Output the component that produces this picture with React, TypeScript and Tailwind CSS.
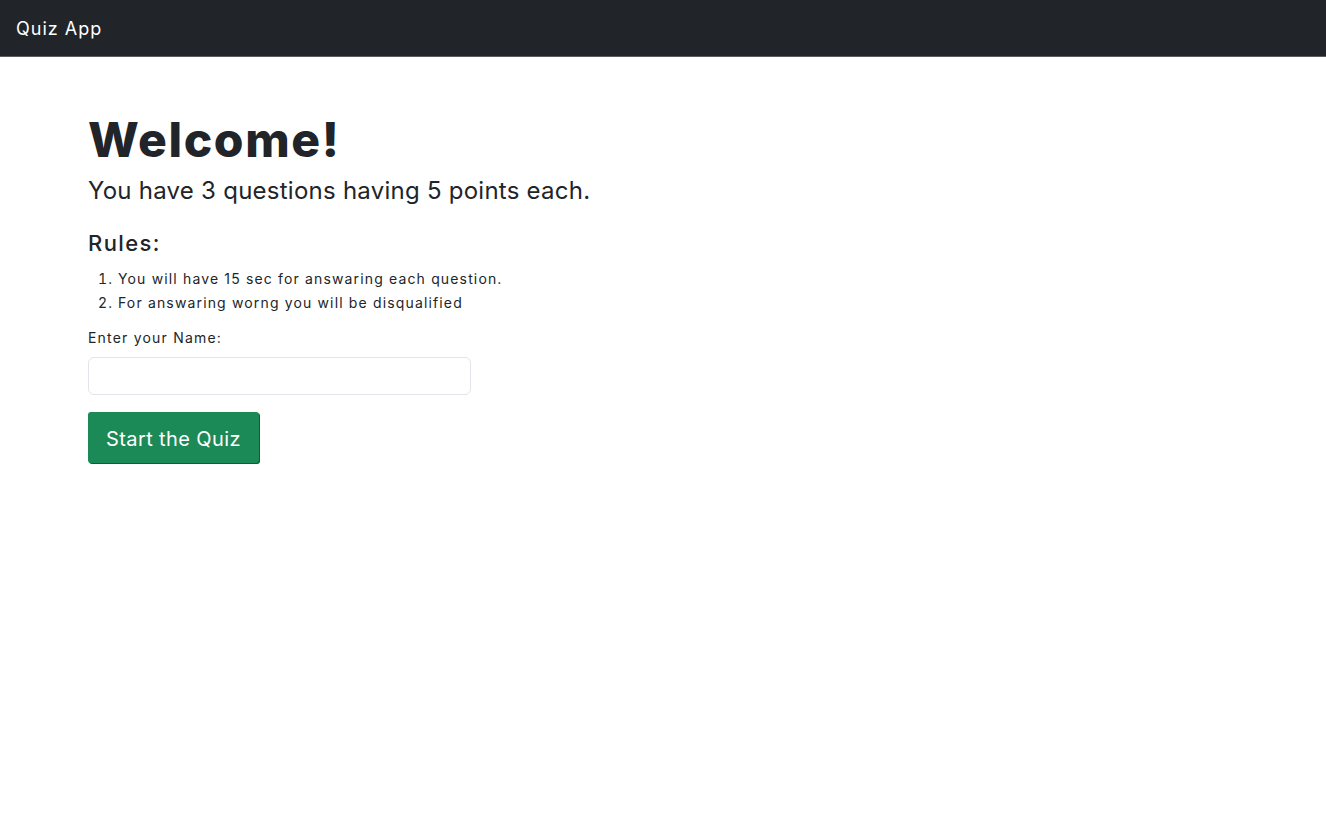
export default function App() {
  return (
    <div className="min-h-screen bg-white font-['Inter',sans-serif] text-[#212529]">
      <nav className="flex h-[57px] items-center border-b border-[#5a5d60] bg-[#212529] px-4">
        <span className="text-[18px] tracking-[1px] text-white">Quiz App</span>
      </nav>

      <main className="flex flex-col items-start px-[88px] pt-[54px]">
        <h1 className="text-[48px] font-extrabold leading-[58px] tracking-[1.6px]">Welcome!</h1>
        <p className="mt-[6px] text-[24px] leading-[32px] tracking-[0.25px]">
          You have 3 questions having 5 points each.
        </p>

        <h2 className="mt-[22px] text-[22px] font-medium leading-[28px] tracking-[1.4px]">Rules:</h2>
        <ol className="mt-[10px] list-decimal pl-[30px] text-[14px] leading-[24px] tracking-[1.15px]">
          <li>You will have 15 sec for answaring each question.</li>
          <li>For answaring worng you will be disqualified</li>
        </ol>

        <label className="mt-[13px] text-[14px] leading-[20px] tracking-[1.2px]">Enter your Name:</label>
        <input
          type="text"
          className="mt-[9px] h-[38px] w-[383px] rounded-[6px] border border-[#e1e4e8] bg-white px-3 text-[15px] outline-none"
        />

        <button className="mt-[17px] h-[51px] w-[171px] rounded-[3px] bg-[#1b8a56] pt-[2px] text-[20px] tracking-[0.4px] text-white shadow-[1px_1px_0_#0f5c38]">
          Start the Quiz
        </button>
      </main>
    </div>
  );
}
